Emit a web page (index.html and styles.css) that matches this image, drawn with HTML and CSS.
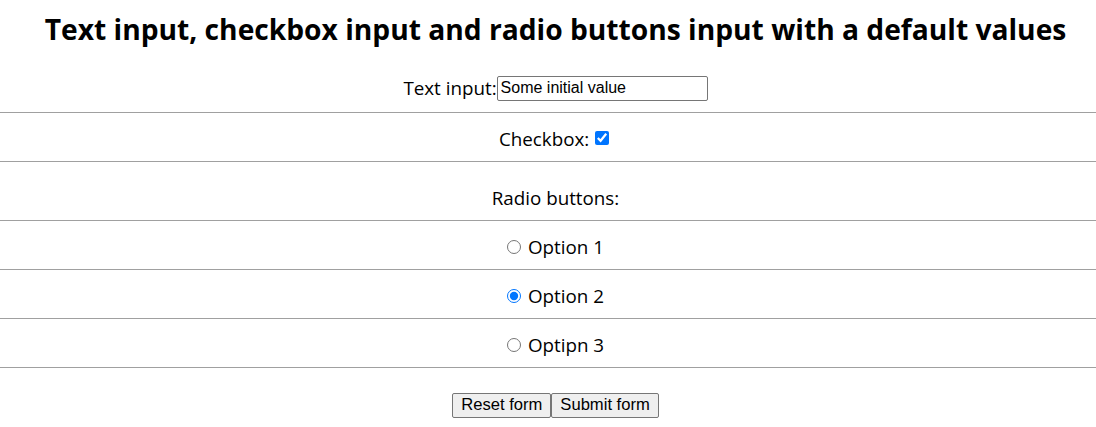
FILE: index.html
```html
<!DOCTYPE html>
<html>
<head>
<meta charset="utf-8">
<link rel="stylesheet" href="styles.css">
</head>
<body>
<h1 class="title">Text input, checkbox input and radio buttons input with a default values</h1>
<form class="form">
  <div class="row row-text">
    <label class="lbl">Text input:</label><input class="text" type="text" value="Some initial value">
  </div>
  <div class="row row-check">
    <label class="lbl">Checkbox: </label><input class="check" type="checkbox" checked>
  </div>
  <div class="row row-label">
    <span class="lbl">Radio buttons:</span>
  </div>
  <div class="row row-option">
    <input class="radio" type="radio" name="opt"><span class="lbl">Option 1</span>
  </div>
  <div class="row row-option">
    <input class="radio" type="radio" name="opt" checked><span class="lbl">Option 2</span>
  </div>
  <div class="row row-option">
    <input class="radio" type="radio" name="opt"><span class="lbl">Optipn 3</span>
  </div>
  <div class="row row-buttons">
    <button class="btn" type="reset">Reset form</button><button class="btn" type="submit">Submit form</button>
  </div>
</form>
</body>
</html>
```
FILE: styles.css
```css
html, body {
  margin: 0;
  padding: 0;
  background: #fff;
}
body {
  font-family: "Open Sans", "Noto Sans", sans-serif;
  color: #000;
}
.title {
  margin: 0;
  height: 64px;
  padding: 9px 0 0 15px;
  box-sizing: border-box;
  text-align: center;
  font-size: 28.2px;
  font-weight: 700;
  line-height: 40px;
}
.form {
  display: flex;
  flex-direction: column;
}
.row {
  box-sizing: border-box;
  height: 49px;
  display: flex;
  align-items: center;
  justify-content: center;
  padding-left: 15px;
  border-bottom: 1px solid #a0a0a0;
  font-size: 18.8px;
}
.row-check {
  padding-top: 3px;
  padding-left: 12px;
}
.row-option {
  padding-top: 3px;
}
.row-label {
  height: 59px;
  padding-top: 14px;
}
.row-buttons {
  border-bottom: none;
  height: 59px;
  padding-top: 15px;
}
.lbl {
  white-space: pre;
}
.text {
  width: 211px;
  height: 25px;
  box-sizing: border-box;
  margin: 0;
  font-family: "Liberation Sans", Arial, sans-serif;
  font-size: 16px;
  padding: 1px 3px;
  border: 1px solid #767676;
  border-radius: 2px;
}
.check {
  width: 14px;
  height: 14px;
  margin: 0 0 2px 1px;
  accent-color: #0075ff;
}
.radio {
  width: 14px;
  height: 14px;
  margin: 0 7px 0 0;
  accent-color: #0075ff;
}
.btn {
  font-family: "Liberation Sans", Arial, sans-serif;
  font-size: 16.6px;
  height: 25px;
  padding: 0 8px;
  margin: 0;
  border: 1px solid #767676;
  border-radius: 2px;
  background: #efefef;
  color: #000;
}
```
